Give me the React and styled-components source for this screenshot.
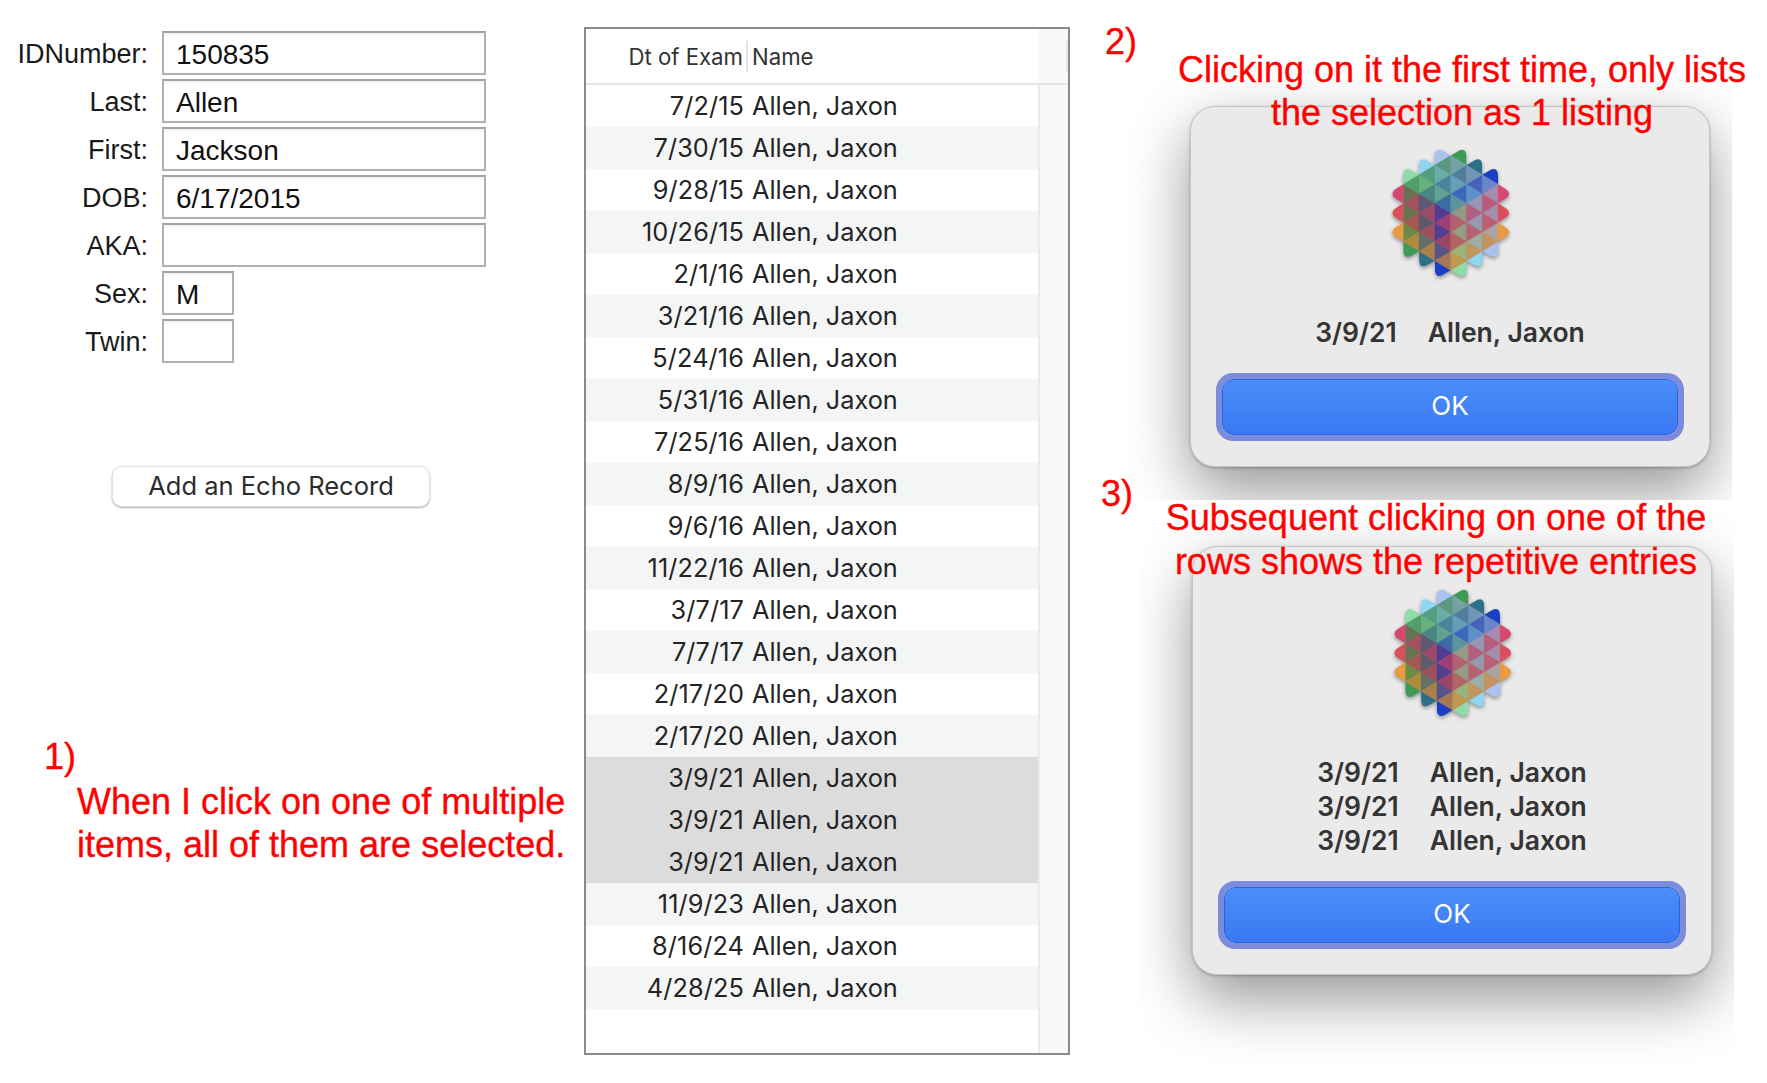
import React, { useId } from 'react';
import styled, { createGlobalStyle } from 'styled-components';

const GlobalStyle = createGlobalStyle`
  html, body { margin: 0; padding: 0; background: #fff; }
  body { font-family: "Inter", "Liberation Sans", sans-serif; }
`;

const Page = styled.div`
  position: relative;
  display: flex;
  width: 1767px;
  height: 1083px;
  overflow: hidden;
  background: #fff;
`;

const Form = styled.div`
  width: 584px;
  flex: none;
  padding-top: 31px;
  box-sizing: border-box;
`;

const FormRow = styled.div`
  display: flex;
  align-items: center;
  gap: 14px;
  height: 44px;
  margin-bottom: 4px;
`;

const Label = styled.label`
  width: 148px;
  padding-top: 3px;
  text-align: right;
  font-family: "Liberation Sans", sans-serif;
  font-size: 27px;
  color: #1a1a1a;
`;

const Field = styled.input`
  box-sizing: border-box;
  width: ${p => (p.$small ? '72px' : '324px')};
  height: 44px;
  padding: 4px 0 0 12px;
  border: 2px solid #b0b0b0;
  border-top-color: #a2a2a2;
  border-radius: 0;
  outline: none;
  background: #fff;
  box-shadow: inset 0 2px 1px #f1f1f1;
  font-family: "Liberation Sans", sans-serif;
  font-size: 28px;
  color: #111;
`;

const AddButton = styled.button`
  display: block;
  box-sizing: border-box;
  width: 318px;
  height: 41px;
  margin: 103px 0 0 112px;
  padding-bottom: 3px;
  border: 1px solid #e4e4e4;
  border-radius: 10px;
  background: #fff;
  box-shadow: 0 1px 2px rgba(0, 0, 0, 0.35);
  font-family: "Inter", sans-serif;
  font-size: 25.5px;
  color: #2c2c2c;
`;

const TablePanel = styled.div`
  display: flex;
  flex: none;
  box-sizing: border-box;
  width: 486px;
  height: 1028px;
  margin-top: 27px;
  border: 2px solid #8a8a8a;
  background: #fff;
`;

const TableMain = styled.div`
  width: 452px;
  flex: none;
`;

const HeaderRow = styled.div`
  display: flex;
  align-items: center;
  height: 54px;
  border-bottom: 2px solid #e6e6e6;
  font-size: 22.2px;
  color: #333;
`;

const DateHead = styled.div`
  width: 157px;
  text-align: right;
`;

const HeadSeparator = styled.div`
  width: 2px;
  height: 31px;
  margin: 0 4px 0 3px;
  background: #e4e4e4;
`;

const Row = styled.div`
  display: flex;
  align-items: center;
  box-sizing: border-box;
  height: 42px;
  padding-bottom: 2px;
  font-size: 25.3px;
  color: #242424;
  background: ${p => (p.$selected ? '#dcdcdc' : p.$striped ? '#f4f5f5' : '#fff')};
`;

const DateCell = styled.div`
  width: 158px;
  text-align: right;
  letter-spacing: 0.1px;
`;

const NameCell = styled.div`
  margin-left: 8px;
`;

const Gutter = styled.div`
  flex: 1;
  background: #f9f9f9;
  border-left: 2px solid #ebebeb;
`;

const GutterCap = styled.div`
  display: flex;
  justify-content: flex-end;
  align-items: center;
  height: 54px;
  margin-left: -2px;
  background: #f8f8f8;
  border-bottom: 2px solid #e6e6e6;
`;

const GutterMark = styled.div`
  width: 2px;
  height: 31px;
  background: #e6e6e6;
`;

const RightColumn = styled.div`
  display: flex;
  flex-direction: column;
  flex: none;
`;

const Shot = styled.div`
  box-sizing: border-box;
  overflow: hidden;
  background: #fff;
  width: ${p => p.$width}px;
  height: ${p => p.$height}px;
  margin-left: ${p => p.$offset}px;
  margin-top: ${p => p.$top || 0}px;
  padding: 46px 0 0 ${p => p.$inset}px;
`;

const Dialog = styled.div`
  display: flex;
  flex-direction: column;
  align-items: center;
  box-sizing: border-box;
  width: 520px;
  padding: 36px 26px 25px;
  border: 1px solid #c6c6c6;
  border-radius: 25px;
  background: #eaeaea;
  box-shadow: 0 24px 62px rgba(0, 0, 0, 0.42), 0 1px 3px rgba(0, 0, 0, 0.25);
`;

const IconSvg = styled.svg`
  width: 133px;
  height: 140px;
  flex: none;
  filter: drop-shadow(0 2px 2px rgba(0, 0, 0, 0.4));
`;

const Message = styled.div`
  margin-top: 33px;
  margin-bottom: 23px;
`;

const MessageLine = styled.div`
  display: flex;
  gap: 31px;
  height: 34px;
  line-height: 33px;
  font-size: 26.5px;
  font-weight: 600;
  color: #343434;
`;

const OkButton = styled.button`
  box-sizing: border-box;
  width: 456px;
  height: 56px;
  margin: 6px;
  padding-bottom: 4px;
  border: 1px solid #2a62e0;
  border-radius: 11px;
  background: linear-gradient(#4a8ef8, #3a78f3);
  box-shadow: 0 0 0 6px #7d8bdd;
  font-family: "Inter", sans-serif;
  font-size: 26px;
  color: #fff;
`;

// the red notes were pasted over the screenshots, so they sit on top of everything
const Note = styled.div`
  position: absolute;
  left: ${p => p.$left}px;
  top: ${p => p.$top}px;
  width: ${p => (p.$width ? `${p.$width}px` : 'auto')};
  font-family: "Liberation Sans", sans-serif;
  font-size: 36px;
  -webkit-text-stroke: 0.35px #ff0000;
  line-height: ${p => p.$line || 43}px;
  text-align: ${p => p.$align || 'left'};
  color: #ff0000;
  white-space: nowrap;
`;

const rows = [
  '7/2/15', '7/30/15', '9/28/15', '10/26/15', '2/1/16', '3/21/16', '5/24/16', '5/31/16',
  '7/25/16', '8/9/16', '9/6/16', '11/22/16', '3/7/17', '7/7/17', '2/17/20', '2/17/20',
  '3/9/21', '3/9/21', '3/9/21', '11/9/23', '8/16/24', '4/28/25',
];

const fields = [
  { label: 'IDNumber:', value: '150835' },
  { label: 'Last:', value: 'Allen' },
  { label: 'First:', value: 'Jackson' },
  { label: 'DOB:', value: '6/17/2015' },
  { label: 'AKA:', value: '' },
  { label: 'Sex:', value: 'M', small: true },
  { label: 'Twin:', value: '', small: true },
];

// icon: triangular lattice woven from translucent ribbons, each ribbon tints
// the triangles pointing its way strongly and the rest of its strip weakly
const STEP = 57.5;
const HALF = 28.75;
const lineX = k => 128 + 47.5 * k;
const spans = [[86, 373.5], [57.25, 402.25], [28.5, 431], [28.5, 431], [57.25, 402.25], [86, 373.5]];

const chevrons = ['#d8486e', '#d9505c', '#ea9a40'];
const leftRibbons = ['#3f9a55', '#2f6e88', '#1b3fc0'];
const rightRibbons = ['#a9c3f0', '#8fd6f2', '#8ddcaa'];

const toRgb = hex => [1, 3, 5].map(i => parseInt(hex.slice(i, i + 2), 16));

const WEAK = 0.55;

const ribbonWeight = (i, col, z, pointsLeft) => {
  const lo = 57.25 + STEP * i;
  const diagonal = col >= i && col <= 3 + i && z >= lo && z < lo + STEP;
  const column = col === i && z >= lo;
  if (pointsLeft) return diagonal ? 1 : column ? WEAK : 0;
  return column ? 1 : diagonal ? WEAK : 0;
};

function triangleColor(points) {
  const cx = (points[0][0] + points[1][0] + points[2][0]) / 3;
  const cy = (points[0][1] + points[1][1] + points[2][1]) / 3;
  const u = (cx - 270.5) / 47.5;
  const col = Math.floor(u + 3);
  const pointsLeft = points[2][0] < points[0][0];
  const layers = [];
  const w = Math.floor((cy + HALF * Math.abs(u) - 229.75) / STEP);
  if (w >= 0 && w <= 2) layers.push([toRgb(chevrons[w]), pointsLeft === u < 0 ? 1.8 : 0.5]);
  for (let i = 0; i < 3; i++) {
    const a = ribbonWeight(i, col, cy + HALF * u, pointsLeft);
    const b = ribbonWeight(i, 5 - col, cy - HALF * u, !pointsLeft);
    if (a) layers.push([toRgb(leftRibbons[i]), a]);
    if (b) layers.push([toRgb(rightRibbons[i]), b]);
  }
  if (layers.length === 0) return '#8a9aa8';
  const total = layers.reduce((t, l) => t + l[1], 0);
  const avg = [0, 1, 2].map(c => layers.reduce((t, l) => t + l[0][c] * l[1], 0) / total);
  if (layers.length === 1) return `rgb(${avg.map(Math.round).join(',')})`;
  const out = avg.map(v => Math.min(255, v * 0.9));
  return `rgb(${out.map(Math.round).join(',')})`;
}

function buildTriangles() {
  const list = [];
  const add = (edge, tip, y0) => {
    list.push([[lineX(edge), y0], [lineX(edge), y0 + STEP], [lineX(tip), y0 + STEP / 2]]);
  };
  spans.forEach(([lo, hi], col) => {
    const outer = col <= 2 ? col : col + 1;
    const inner = col <= 2 ? col + 1 : col;
    for (let y = lo; y < hi - 1; y += STEP) add(outer, inner, y);
    for (let y = lo + STEP / 2; y < hi - STEP / 2 - 1; y += STEP) add(inner, outer, y);
  });
  [143.5, 201, 258.5].forEach(y => {
    add(0, -1, y);
    add(6, 7, y);
  });
  return list;
}

const triangles = buildTriangles().map(points => ({
  points: points.join(' '),
  fill: triangleColor(points),
}));

const outline = [
  [223, 28.5, 1], [270.5, 57, 0], [318, 28.5, 1], [318, 86, 0], [365.5, 57, 1], [365.5, 114.5, 0],
  [413, 86, 1], [413, 143.5, 0], [460.5, 172, 1], [413, 201, 0], [460.5, 230, 1], [413, 258.5, 0],
  [460.5, 287, 1], [413, 316, 0], [413, 373.5, 1], [365.5, 345, 0], [365.5, 402, 1], [318, 373.5, 0],
  [318, 431, 1], [270.5, 402, 0], [223, 431, 1], [223, 373.5, 0], [175.5, 402, 1], [175.5, 345, 0],
  [128, 373.5, 1], [128, 316, 0], [80.5, 287, 1], [128, 258.5, 0], [80.5, 230, 1], [128, 201, 0],
  [80.5, 172, 1], [128, 143.5, 0], [128, 86, 1], [175.5, 115, 0], [175.5, 57, 1], [223, 86, 0],
];

function roundedOutline(points, d) {
  const towards = (a, b, dist) => {
    const len = Math.hypot(b[0] - a[0], b[1] - a[1]);
    return [a[0] + ((b[0] - a[0]) * dist) / len, a[1] + ((b[1] - a[1]) * dist) / len];
  };
  return points
    .map((p, i) => {
      const prev = points[(i + points.length - 1) % points.length];
      const next = points[(i + 1) % points.length];
      if (!p[2]) return `L${p[0]} ${p[1]}`;
      const a = towards(p, prev, d);
      const b = towards(p, next, d);
      return `L${a[0]} ${a[1]} Q${p[0]} ${p[1]} ${b[0]} ${b[1]}`;
    })
    .join(' ')
    .replace(/^L/, 'M') + ' Z';
}

const outlinePath = roundedOutline(outline, 34);

function LatticeIcon() {
  const id = useId();
  return (
    <IconSvg viewBox="70 20 400 420">
      <clipPath id={id}>
        <path d={outlinePath} />
      </clipPath>
      <g clipPath={`url(#${id})`}>
        {triangles.map((t, i) => (
          <polygon key={i} points={t.points} fill={t.fill} stroke={t.fill} strokeWidth="0.6" />
        ))}
      </g>
    </IconSvg>
  );
}

function AlertDialog({ lines }) {
  return (
    <Dialog>
      <LatticeIcon />
      <Message>
        {Array.from({ length: lines }, (_, i) => (
          <MessageLine key={i}>
            <span>3/9/21</span>
            <span>Allen, Jaxon</span>
          </MessageLine>
        ))}
      </Message>
      <OkButton>OK</OkButton>
    </Dialog>
  );
}

export default function App() {
  return (
    <Page>
      <GlobalStyle />
      <Form>
        {fields.map(f => (
          <FormRow key={f.label}>
            <Label>{f.label}</Label>
            <Field readOnly value={f.value} $small={f.small} />
          </FormRow>
        ))}
        <AddButton>Add an Echo Record</AddButton>
      </Form>

      <TablePanel>
        <TableMain>
          <HeaderRow>
            <DateHead>Dt of Exam</DateHead>
            <HeadSeparator />
            <div>Name</div>
          </HeaderRow>
          {rows.map((date, i) => (
            <Row key={i} $striped={i % 2 === 1} $selected={date === '3/9/21'}>
              <DateCell>{date}</DateCell>
              <NameCell>Allen, Jaxon</NameCell>
            </Row>
          ))}
        </TableMain>
        <Gutter>
          <GutterCap>
            <GutterMark />
          </GutterCap>
        </Gutter>
      </TablePanel>

      <RightColumn>
        <Shot $width={609} $height={440} $offset={53} $top={60} $inset={67}>
          <AlertDialog lines={1} />
        </Shot>
        <Shot $width={594} $height={583} $offset={70} $inset={52}>
          <AlertDialog lines={3} />
        </Shot>
      </RightColumn>

      <Note $left={44} $top={735}>1)</Note>
      <Note $left={77} $top={780}>
        When I click on one of multiple
        <br />
        items, all of them are selected.
      </Note>
      <Note $left={1105} $top={20}>2)</Note>
      <Note $left={1162} $top={48} $width={600} $align="center">
        Clicking on it the first time, only lists
        <br />
        the selection as 1 listing
      </Note>
      <Note $left={1101} $top={472}>3)</Note>
      <Note $left={1136} $top={496} $width={600} $align="center" $line={44}>
        Subsequent clicking on one of the
        <br />
        rows shows the repetitive entries
      </Note>
    </Page>
  );
}
